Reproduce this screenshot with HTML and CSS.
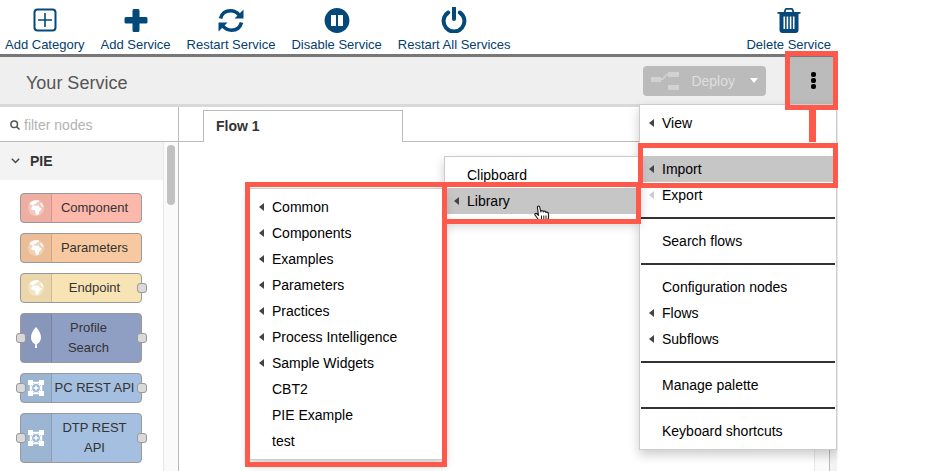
FILE: index.html
```html
<!DOCTYPE html>
<html lang="en">
<head>
    <meta charset="UTF-8">
    <meta name="viewport" content="width=device-width, initial-scale=1.0">
    <title>Your Service</title>
    <link rel="stylesheet" href="styles.css">
</head>
<body>
    <!-- shared icons -->
    <svg class="defs" width="0" height="0">
        <symbol id="globe" viewBox="0 0 16 16">
            <circle cx="8" cy="8" r="8" fill="#fff" opacity=".3"/>
            <path fill="#fff" d="M6 .6 8.500 0l3 .8-1 1.200-1.500.2-1 1.500-1.500.3L5 5.500 3 5 1.500 3.500 3 1.800zM4.500 6l2-.8 2 .6 2-.2L12 8l1.800.2-1 2-1.600 1.200-.2 1.800-1.500 1.800-1.500-.2-.7-3L6.500 10l-2.200.2L3 8.500zM12 3l2 .5 1.500 3-1 .8-1.500-2z"/>
        </symbol>
        <symbol id="api" viewBox="0 0 16 16">
            <path fill="none" stroke="#fff" stroke-width="1.500" d="M2.500 2.500h11v11h-11z"/>
            <path fill="#fff" d="M0 0h5v5H0zM11 0h5v5h-5zM0 11h5v5H0zM11 11h5v5h-5z"/>
            <circle cx="8" cy="8" r="4.500" fill="#9ab5d3" stroke="#fff" stroke-width="1.200"/>
            <path stroke="#fff" stroke-width="1.500" d="M8 5.500v5M5.500 8h5"/>
        </symbol>
        <symbol id="leaf" viewBox="0 0 16 22">
            <path fill="#fff" d="M8 0C4.500 4 3 7 3 10.500c0 3 1.500 5.300 4.200 6.800L7 21h2l-.2-3.700C11.500 15.800 13 13.500 13 10.500 13 7 11.500 4 8 0z"/>
        </symbol>
    </svg>

    <div class="app">
        <nav class="toolbar">
            <button type="button" class="tool">
                <svg width="24" height="26" viewBox="0 0 24 26" fill="none" stroke="#04497a">
                    <rect x="1.500" y="2.500" width="21" height="21" rx="3" stroke-width="2"/>
                    <path stroke-width="1.600" d="M12 6v14M5 13h14"/>
                </svg>
                Add Category
            </button>
            <button type="button" class="tool">
                <svg width="24" height="26" viewBox="0 0 24 26" fill="#04497a">
                    <path d="M10 2h4q1.500 0 1.500 1.500V10H22q1.500 0 1.500 1.500v3.500q0 1.500-1.500 1.500h-6.500V23.500Q15.500 25 14 25h-4q-1.500 0-1.500-1.500v-7H2Q.5 16.500.5 15v-3.500Q.5 10 2 10h6.500V3.500Q8.500 2 10 2z"/>
                </svg>
                Add Service
            </button>
            <button type="button" class="tool">
                <svg width="26" height="26" viewBox="0 0 26 26" fill="none" stroke="#04497a" stroke-width="3.600">
                    <path d="M2.500 11.500C4 6 8 3.800 12.500 3.800c4 0 6.500 1.600 8.500 4M23.500 15.500C22 21 18 23.200 13.500 23.200c-4 0-6.500-1.600-8.500-4"/>
                    <path fill="#04497a" stroke="none" d="M25.500 2.500v9h-9zM.5 24.500v-9h9z"/>
                </svg>
                Restart Service
            </button>
            <button type="button" class="tool">
                <svg width="26" height="26" viewBox="0 0 26 26">
                    <circle cx="13" cy="13.500" r="12.400" fill="#04497a"/>
                    <path fill="#fff" d="M7 8h5v11H7zM14 8h5v11h-5z"/>
                </svg>
                Disable Service
            </button>
            <button type="button" class="tool">
                <svg width="26" height="26" viewBox="0 0 26 26" fill="none" stroke="#04497a" stroke-width="4" stroke-linecap="round">
                    <path d="M7.200 5.500A10.400 10.400 0 1 0 18.800 5.500M13 1v11"/>
                </svg>
                Restart All Services
            </button>
            <button type="button" class="tool tool-delete">
                <svg width="24" height="26" viewBox="0 0 24 26">
                    <path fill="none" stroke="#04497a" stroke-width="1.800" d="M7.500 5.500 8.500 2.500q.2-.6 1-.6h5q.8 0 1 .6l1 3"/>
                    <path fill="#04497a" d="M.5 5h23v1.800h-2V23q0 3-3 3h-13q-3 0-3-3V6.800h-2z"/>
                    <path stroke="#fff" stroke-width="1.600" d="M7.300 9.500v12.500M10.400 9.500v12.500M13.600 9.500v12.500M16.700 9.500v12.500"/>
                </svg>
                Delete Service
            </button>
        </nav>

        <header class="header">
            <h1 class="title">Your Service</h1>
            <button type="button" class="deploy">
                <svg width="28" height="20" viewBox="0 0 28 20">
                    <path fill="#d2d2d2" d="M0 6h10v5H0zM17 1h11v5H17zM17 14h11v5H17z"/>
                    <path fill="none" stroke="#d2d2d2" stroke-width="1.500" d="M10 8.500c4 0 3-5 7-5"/>
                </svg>
                <span>Deploy</span>
                <i class="caret"></i>
            </button>
            <div class="main-menu">
                <button type="button" class="menu-button" aria-label="Menu">
                    <i class="dot"></i><i class="dot"></i><i class="dot"></i>
                </button>
                <ul class="menu">
                    <li class="item parent"><a href="#">View</a></li>
                    <li class="divider"></li>
                    <li class="item parent active">
                        <a href="#">Import</a>
                        <ul class="menu submenu">
                            <li class="item"><a href="#">Clipboard</a></li>
                            <li class="item parent active">
                                <a href="#">Library</a>
                                <ul class="menu submenu">
                                    <li class="item parent"><a href="#">Common</a></li>
                                    <li class="item parent"><a href="#">Components</a></li>
                                    <li class="item parent"><a href="#">Examples</a></li>
                                    <li class="item parent"><a href="#">Parameters</a></li>
                                    <li class="item parent"><a href="#">Practices</a></li>
                                    <li class="item parent"><a href="#">Process Intelligence</a></li>
                                    <li class="item parent"><a href="#">Sample Widgets</a></li>
                                    <li class="item"><a href="#">CBT2</a></li>
                                    <li class="item"><a href="#">PIE Example</a></li>
                                    <li class="item"><a href="#">test</a></li>
                                    <li class="callout callout-list"></li>
                                </ul>
                                <svg class="pointer" width="16" height="18" viewBox="0 0 16 18">
                                    <path fill="#fff" stroke="#222" stroke-width="1.200" stroke-linejoin="round" d="M5 17l-1-3-3-4q-.5-1.500 1-1.600 1 .1 2.500 2L3.500 3Q3.300 1 4.500 1 5.600 1 6 3l.8 4q0-1.500 1.200-1.500T9.300 7q.2-1 1.300-.9T12 7.600q.3-.8 1.300-.5T14.500 9v4L13 17z"/>
                                    <path stroke="#222" d="M7.500 10.500v4M9.800 10.500v4M12 10.500v4"/>
                                </svg>
                                <span class="callout callout-library"></span>
                            </li>
                        </ul>
                        <span class="callout callout-import"></span>
                    </li>
                    <li class="item parent disabled"><a href="#">Export</a></li>
                    <li class="divider"></li>
                    <li class="item"><a href="#">Search flows</a></li>
                    <li class="divider"></li>
                    <li class="item"><a href="#">Configuration nodes</a></li>
                    <li class="item parent"><a href="#">Flows</a></li>
                    <li class="item parent"><a href="#">Subflows</a></li>
                    <li class="divider"></li>
                    <li class="item"><a href="#">Manage palette</a></li>
                    <li class="divider"></li>
                    <li class="item"><a href="#">Keyboard shortcuts</a></li>
                </ul>
                <span class="callout callout-button"></span>
                <span class="connector"></span>
            </div>
        </header>

        <div class="editor">
            <aside class="palette">
                <label class="search">
                    <svg width="10" height="10" viewBox="0 0 10 10" fill="none" stroke="#555" stroke-width="1.500">
                        <circle cx="4.200" cy="4.200" r="3.300"/>
                        <path d="M6.600 6.600 9.500 9.500"/>
                    </svg>
                    <input type="text" placeholder="filter nodes" aria-label="filter nodes">
                </label>
                <div class="palette-body">
                    <div class="palette-list">
                        <h2 class="category">
                            <svg width="9" height="6" viewBox="0 0 9 6" fill="none" stroke="#444" stroke-width="1.400"><path d="M.8.8 4.500 4.600 8.200.8"/></svg>
                            PIE
                        </h2>
                        <div class="nodes">
                            <div class="node component">
                                <span class="node-icon"><svg width="16" height="16"><use href="#globe"/></svg></span>
                                <span class="node-label">Component</span>
                            </div>
                            <div class="node parameters">
                                <span class="node-icon"><svg width="16" height="16"><use href="#globe"/></svg></span>
                                <span class="node-label">Parameters</span>
                            </div>
                            <div class="node endpoint">
                                <span class="node-icon"><svg width="16" height="16"><use href="#globe"/></svg></span>
                                <span class="node-label">Endpoint</span>
                                <i class="port out"></i>
                            </div>
                            <div class="node profile">
                                <i class="port in"></i>
                                <span class="node-icon"><svg width="16" height="22"><use href="#leaf"/></svg></span>
                                <span class="node-label">Profile<br>Search</span>
                                <i class="port out"></i>
                            </div>
                            <div class="node rest">
                                <i class="port in"></i>
                                <span class="node-icon"><svg width="16" height="16"><use href="#api"/></svg></span>
                                <span class="node-label">PC REST API</span>
                                <i class="port out"></i>
                            </div>
                            <div class="node rest">
                                <i class="port in"></i>
                                <span class="node-icon"><svg width="16" height="16"><use href="#api"/></svg></span>
                                <span class="node-label">DTP REST<br>API</span>
                                <i class="port out"></i>
                            </div>
                        </div>
                    </div>
                    <div class="scrollbar"><div class="thumb"></div></div>
                </div>
            </aside>
            <main class="workspace">
                <div class="tabs"><a href="#" class="tab">Flow 1</a></div>
                <div class="canvas">
                    <div class="scrollbar"></div>
                </div>
            </main>
            <div class="separator"></div>
        </div>
    </div>
</body>
</html>
```
FILE: styles.css
```css
* {
    box-sizing: border-box;
}
body {
    margin: 0;
    padding-right: 104px;
    background: #fff;
    font-family: "Liberation Sans", Arial, sans-serif;
    font-size: 14px;
    color: #000;
}
button, input {
    font-family: inherit;
    border: none;
    padding: 0;
}
a {
    color: inherit;
    text-decoration: none;
}
svg {
    display: block;
}
.defs {
    position: absolute;
}
.app {
    display: flex;
    flex-direction: column;
    height: 100vh;
    overflow: clip;
    overflow-clip-margin: 1px;
}

/* service toolbar */
.toolbar {
    display: flex;
    gap: 16px;
    height: 57px;
    padding: 7px 6px 0 5px;
    border-bottom: 3px solid #777;
}
.tool {
    display: flex;
    flex-direction: column;
    align-items: center;
    gap: 4px;
    background: none;
    color: #04406e;
    font-size: 13px;
    line-height: 16px;
    white-space: nowrap;
}
.tool-delete {
    margin-left: auto;
}

/* header */
.header {
    display: flex;
    align-items: center;
    height: 50px;
    padding-left: 26px;
    background: #efefef;
    border-bottom: 3px solid #d9d9d9;
}
.title {
    margin: 0 auto 0 0;
    padding-top: 6px;
    font-size: 18px;
    font-weight: normal;
    color: #555;
}
.deploy {
    display: flex;
    align-items: center;
    gap: 12px;
    height: 30px;
    margin-right: 24px;
    padding: 0 8px;
    border-radius: 4px;
    background: #bbb;
    color: #dedede;
    font-size: 14px;
}
.caret {
    margin-left: 3px;
    border: 4px solid transparent;
    border-top: 5px solid #fff;
    border-bottom: none;
}
.main-menu {
    position: relative;
    align-self: stretch;
}
.menu-button {
    display: flex;
    flex-direction: column;
    align-items: center;
    justify-content: center;
    gap: 1px;
    width: 47px;
    height: 100%;
    background: #bbb;
}
.dot {
    width: 5px;
    height: 5px;
    border-radius: 2px;
    background: #000;
}

/* menus */
.menu {
    position: absolute;
    top: 100%;
    right: 0;
    z-index: 10;
    width: 198px;
    margin: 0;
    padding: 5px 0;
    list-style: none;
    background: #fff;
    border: 1px solid #ccc;
    box-shadow: 0 5px 10px rgba(0, 0, 0, 0.2);
}
.submenu {
    top: 0;
    right: 100%;
    width: 196px;
}
.item {
    position: relative;
}
.item > a {
    display: block;
    padding-left: 22px;
    line-height: 26px;
}
.active > a {
    background: #c6c6c6;
}
.parent > a::before {
    content: "";
    position: absolute;
    top: 9px;
    left: 9px;
    border: 4px solid transparent;
    border-right: 5px solid #444;
    border-left: none;
}
.disabled > a::before {
    border-right-color: #ccc;
}
.divider {
    height: 2px;
    margin: 9px 1px;
    background: #333;
}
.pointer {
    position: absolute;
    top: 17px;
    left: 89px;
    z-index: 11;
}

/* highlight frames */
.callout {
    position: absolute;
    z-index: 12;
    border: 5px solid #ff594c;
    pointer-events: none;
}
.callout-button {
    inset: -6px -1px -6px -5px;
}
.callout-import {
    inset: -13px -2px -6px;
}
.callout-library {
    inset: -6px -2px -10px -3px;
}
.callout-list {
    inset: -7px -3px -8px -5px;
}
.connector {
    position: absolute;
    top: 100%;
    right: 21px;
    z-index: 12;
    width: 7px;
    height: 34px;
    margin-top: 4px;
    background: #ff594c;
}

/* editor */
.editor {
    display: flex;
    flex: 1;
    min-height: 0;
}
.palette {
    display: flex;
    flex-direction: column;
    width: 179px;
    border-right: 1px solid #bbb;
}
.search {
    display: flex;
    align-items: center;
    gap: 4px;
    height: 35px;
    padding: 2px 0 0 10px;
    border-bottom: 1px solid #bbb;
}
.search input {
    width: 140px;
    background: none;
    font-size: 14px;
}
.search input::placeholder {
    color: #b3b3b3;
}
.palette-body {
    display: flex;
    flex: 1;
    min-height: 0;
}
.palette-list {
    flex: 1;
    overflow: hidden;
}
.category {
    display: flex;
    align-items: center;
    gap: 10px;
    height: 38px;
    margin: 0;
    padding-left: 11px;
    background: #f3f3f3;
    font-size: 14px;
    color: #333;
}
.nodes {
    display: flex;
    flex-direction: column;
    gap: 10px;
    padding: 13px 21px 8px 20px;
}
.node {
    position: relative;
    display: flex;
    border: 1px solid #999;
    border-radius: 4px;
    color: #333;
    font-size: 13px;
    line-height: 20px;
}
.node-icon {
    display: flex;
    align-items: center;
    justify-content: center;
    width: 31px;
    background: rgba(0, 0, 0, 0.05);
    border-right: 1px solid rgba(0, 0, 0, 0.12);
}
.node-label {
    flex: 1;
    padding: 4px 4px 4px 0;
    text-align: center;
    white-space: nowrap;
}
.component {
    background: #fbb8ab;
}
.parameters {
    background: #f8c9a0;
}
.endpoint {
    background: #f8e3b5;
}
.profile {
    background: #8f9fc3;
}
.profile .node-label {
    padding-right: 16px;
}
.rest {
    background: #a4bfdf;
}
.port {
    position: absolute;
    top: calc(50% - 5px);
    width: 10px;
    height: 10px;
    border: 1px solid #999;
    border-radius: 3px;
    background: #d9d9d9;
}
.in {
    left: -5px;
}
.out {
    right: -6px;
}
.scrollbar {
    width: 15px;
    padding: 3px 3px 0;
    background: #fafafa;
    border-left: 1px solid #e7e7e7;
}
.thumb {
    height: 60px;
    border-radius: 4px;
    background: #c1c1c1;
}
.workspace {
    display: flex;
    flex: 1;
    flex-direction: column;
}
.tabs {
    height: 35px;
    padding: 3px 24px 0;
    border-bottom: 1px solid #bbb;
}
.tab {
    display: block;
    width: 200px;
    height: 32px;
    padding-left: 12px;
    background: #fff;
    border: 1px solid #bbb;
    border-bottom: none;
    color: #333;
    font-weight: bold;
    line-height: 31px;
}
.canvas {
    display: flex;
    flex: 1;
    justify-content: flex-end;
}
.separator {
    width: 8px;
    background: #f3f3f3;
    border-left: 1px solid #bbb;
}
```
